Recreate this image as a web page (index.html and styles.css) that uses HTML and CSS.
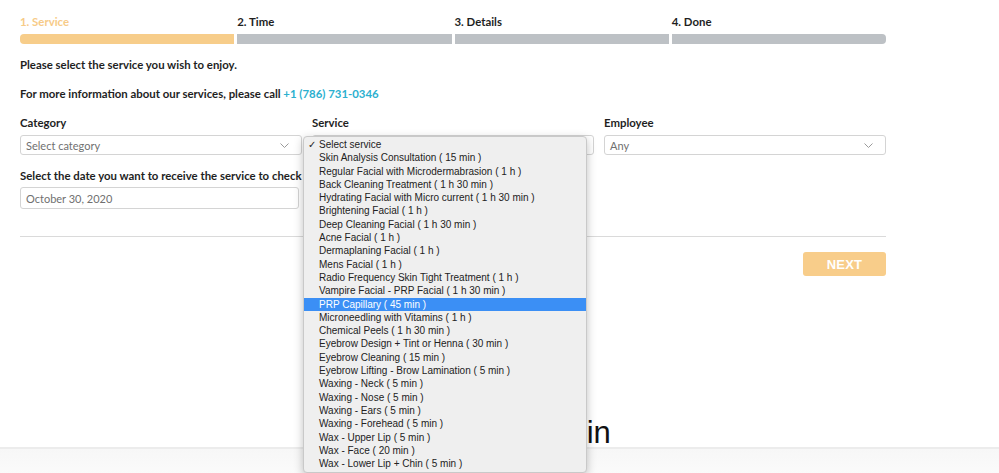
FILE: index.html
```html
<!DOCTYPE html>
<html>
<head>
<meta charset="utf-8">
<link rel="stylesheet" href="styles.css">
</head>
<body>
<div class="page">
  <div class="steps">
    <div class="step active"><div class="step-label">1. Service</div><div class="bar first"></div></div>
    <div class="step"><div class="step-label">2. Time</div><div class="bar"></div></div>
    <div class="step"><div class="step-label">3. Details</div><div class="bar"></div></div>
    <div class="step"><div class="step-label">4. Done</div><div class="bar last"></div></div>
  </div>

  <p class="intro first-intro">Please select the service you wish to enjoy.</p>
  <p class="intro">For more information about our services, please call <a class="phone">+1 (786) 731-0346</a></p>

  <div class="fields">
    <div class="field">
      <div class="label">Category</div>
      <div class="select"><span class="placeholder">Select category</span><svg class="chev" width="9" height="5" viewBox="0 0 9 5"><path d="M0.5 0.5 L4.5 4.5 L8.5 0.5" fill="none" stroke="#9a9a9a" stroke-width="1"/></svg></div>
    </div>
    <div class="field service-field">
      <div class="label">Service</div>
      <div class="select"><span class="placeholder">Select service</span></div>
      <ul class="menu">
        <li class="checked">Select service</li>
        <li>Skin Analysis Consultation ( 15 min )</li>
        <li>Regular Facial with Microdermabrasion ( 1 h )</li>
        <li>Back Cleaning Treatment ( 1 h 30 min )</li>
        <li>Hydrating Facial with Micro current ( 1 h 30 min )</li>
        <li>Brightening Facial ( 1 h )</li>
        <li>Deep Cleaning Facial ( 1 h 30 min )</li>
        <li>Acne Facial ( 1 h )</li>
        <li>Dermaplaning Facial ( 1 h )</li>
        <li>Mens Facial ( 1 h )</li>
        <li>Radio Frequency Skin Tight Treatment ( 1 h )</li>
        <li>Vampire Facial - PRP Facial ( 1 h 30 min )</li>
        <li class="hover">PRP Capillary ( 45 min )</li>
        <li>Microneedling with Vitamins ( 1 h )</li>
        <li>Chemical Peels ( 1 h 30 min )</li>
        <li>Eyebrow Design + Tint or Henna ( 30 min )</li>
        <li>Eyebrow Cleaning ( 15 min )</li>
        <li>Eyebrow Lifting - Brow Lamination ( 5 min )</li>
        <li>Waxing - Neck ( 5 min )</li>
        <li>Waxing - Nose ( 5 min )</li>
        <li>Waxing - Ears ( 5 min )</li>
        <li>Waxing - Forehead ( 5 min )</li>
        <li>Wax - Upper Lip ( 5 min )</li>
        <li>Wax - Face ( 20 min )</li>
        <li>Wax - Lower Lip + Chin ( 5 min )</li>
      </ul>
    </div>
    <div class="field">
      <div class="label">Employee</div>
      <div class="select"><span class="placeholder">Any</span><svg class="chev" width="9" height="5" viewBox="0 0 9 5"><path d="M0.5 0.5 L4.5 4.5 L8.5 0.5" fill="none" stroke="#9a9a9a" stroke-width="1"/></svg></div>
    </div>
  </div>

  <div class="label date-label">Select the date you want to receive the service to check availability</div>
  <div class="input">October 30, 2020</div>

  <div class="rule"></div>
  <div class="actions"><button class="next">NEXT</button></div>
</div>
<div class="bottom">
  <div class="login-row"><h2 class="login">Login</h2></div>
  <div class="bottom-band"></div>
</div>
</body>
</html>
```
FILE: styles.css
```css
html, body { margin: 0; padding: 0; background: #fff; overflow: hidden; height: 473px; }
body { font-family: "Lato", "Open Sans", sans-serif; color: #1f1f1f; }
.page { width: 866px; margin-left: 20px; padding-top: 15px; }
.steps { display: grid; grid-template-columns: repeat(4, 1fr); gap: 3px; }
.step-label { font-size: 11.4px; font-weight: 700; line-height: 14px; height: 14px; color: #1f1f1f; }
.step.active .step-label { color: #f7cb88; }
.bar { height: 10px; margin-top: 5px; background: #bdc1c5; }
.step.active .bar { background: #f7cd8a; }
.bar.first { border-radius: 4px 0 0 4px; }
.bar.last { border-radius: 0 4px 4px 0; }
.intro { margin: 14px 0 0; font-size: 11.4px; font-weight: 700; line-height: 14px; }
.intro.first-intro { margin-top: 14px; }
.intro + .intro { margin-top: 15px; }
.phone { color: #2cb0cf; text-decoration: none; }
.fields { display: grid; grid-template-columns: repeat(3, 1fr); gap: 10px; margin-top: 15px; }
.field { position: relative; }
.label { font-size: 11.4px; font-weight: 700; line-height: 14px; }
.select { margin-top: 5px; height: 18px; border: 1px solid #d4d4d4; border-radius: 3px; display: flex; align-items: center; justify-content: space-between; padding: 0 12px 0 5px; }
.placeholder { font-size: 11px; color: #707070; }
.chev { display: block; }
.date-label { margin-top: 14px; }
.input { margin-top: 4px; width: 267px; height: 20px; border: 1px solid #d4d4d4; border-radius: 3px; padding: 0 5px; font-size: 11px; color: #707070; display: flex; align-items: center; }
.rule { margin-top: 27px; height: 1px; background: #dadada; }
.actions { display: flex; justify-content: flex-end; margin-top: 15px; }
.next { width: 83px; height: 24px; border: 0; border-radius: 3px; background: #f8cd8a; color: #fff; font-family: "Liberation Sans", Arial, sans-serif; font-weight: 700; font-size: 13px; letter-spacing: 0.2px; padding: 0; }

.menu { position: absolute; left: -9px; top: 20px; width: 282px; margin: 0; padding: 1px 0 2px; list-style: none; background: #efefef; border: 1px solid #c9c9c9; border-radius: 4px; box-shadow: 0 3px 10px rgba(0,0,0,0.25); font-family: "Liberation Sans", Arial, sans-serif; font-size: 10px; color: #222; z-index: 5; }
.menu li { height: 13.3px; line-height: 13.3px; padding-left: 15px; white-space: nowrap; position: relative; }
.menu li.checked::before { content: "\2713"; position: absolute; left: 4px; font-size: 10px; }
.menu li.hover { background: #3b8ff5; color: #fff; }

.bottom { position: relative; margin-top: 145px; }
.login-row { height: 26px; display: flex; padding-left: 535px; }
.login { margin: 0; font-family: "Liberation Sans", Arial, sans-serif; font-weight: 400; font-size: 31px; line-height: 24px; color: #111; }
.bottom-band { height: 40px; border-top: 2px solid #ececec; background: linear-gradient(#f7f7f7, #fdfdfd); }
```
